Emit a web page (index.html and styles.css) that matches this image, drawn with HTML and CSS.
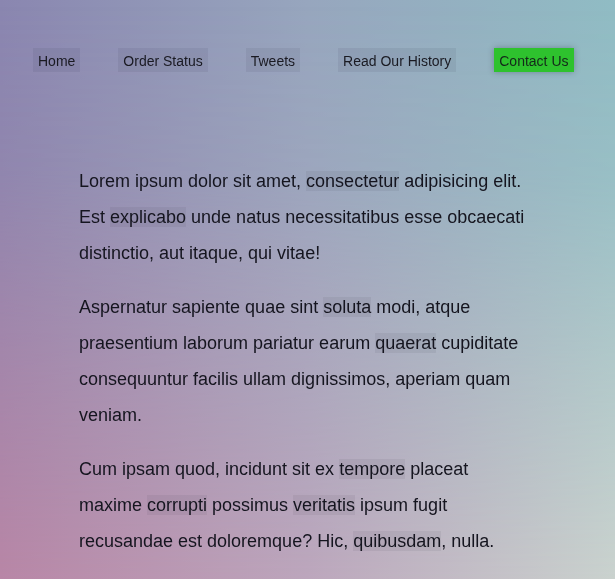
FILE: index.html
```html
<!DOCTYPE html>
<html lang="en">
<head>
<meta charset="utf-8">
<title>Page</title>
<link rel="stylesheet" href="styles.css">
</head>
<body>
<div class="backdrop"></div>
<nav class="nav">
  <a class="nav-link" href="#">Home</a>
  <a class="nav-link" href="#">Order Status</a>
  <a class="nav-link" href="#">Tweets</a>
  <a class="nav-link" href="#">Read Our History</a>
  <a class="nav-link nav-link--cta" href="#">Contact Us</a>
</nav>
<main class="content">
  <p>Lorem ipsum dolor sit amet, <span class="hl">consectetur</span> adipisicing elit. Est <span class="hl">explicabo</span> unde natus necessitatibus esse obcaecati distinctio, aut itaque, qui vitae!</p>
  <p>Aspernatur sapiente quae sint <span class="hl">soluta</span> modi, atque praesentium laborum pariatur earum <span class="hl">quaerat</span> cupiditate consequuntur facilis ullam dignissimos, aperiam quam veniam.</p>
  <p>Cum ipsam quod, incidunt sit ex <span class="hl">tempore</span> placeat maxime <span class="hl">corrupti</span> possimus <span class="hl">veritatis</span> ipsum fugit recusandae est doloremque? Hic, <span class="hl">quibusdam</span>, nulla.</p>
</main>
</body>
</html>
```

FILE: styles.css
```css
html {
  height: 100%;
  background: linear-gradient(to right, #8a86b0 0%, #97a6be 50%, #90bcc4 100%);
}
body {
  margin: 0;
  min-height: 100%;
  font-family: "Liberation Sans", Arial, sans-serif;
  color: #15151f;
  overflow: hidden;
}
.backdrop {
  position: fixed;
  inset: 0;
  z-index: -1;
  background: linear-gradient(to right, #b886a6 0%, #bca6bc 50%, #cad2ce 100%);
  -webkit-mask-image: linear-gradient(to bottom, transparent 0%, rgba(0,0,0,0.15) 30%, rgba(0,0,0,0.6) 65%, #000 100%);
  mask-image: linear-gradient(to bottom, transparent 0%, rgba(0,0,0,0.15) 30%, rgba(0,0,0,0.6) 65%, #000 100%);
}
.nav {
  display: flex;
  gap: 38px;
  padding: 48px 0 0 33px;
}
.nav-link {
  display: block;
  font-size: 14px;
  line-height: 16px;
  padding: 5px 5px 3px;
  color: #1a1a22;
  text-decoration: none;
  background: rgba(40, 40, 70, 0.08);
}
.nav-link--cta {
  background: #2ec22e;
  color: #14281a;
  box-shadow: 0 0 6px rgba(40, 40, 60, 0.35);
}
.content {
  padding: 91px 0 0 79px;
  width: 450px;
}
.content p {
  font-size: 18px;
  line-height: 36px;
  margin: 0 0 18px;
}
.hl {
  background: rgba(40, 40, 60, 0.07);
}
```
